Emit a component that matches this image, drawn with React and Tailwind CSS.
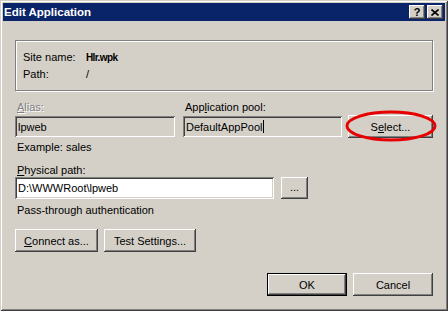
import React from "react";

const raised =
  "shadow-[inset_-1px_-1px_0_#404040,inset_1px_1px_0_#ffffff,inset_-2px_-2px_0_#808080,inset_2px_2px_0_#d4d0c8]";
const sunken =
  "shadow-[inset_1px_1px_0_#808080,inset_-1px_-1px_0_#ffffff,inset_2px_2px_0_#404040,inset_-2px_-2px_0_#d4d0c8]";

function Btn({ children, w, isDefault }) {
  if (isDefault) {
    return (
      <div className={`${w} h-[23px] border border-black bg-[#d4d0c8]`}>
        <div className={`w-full h-full flex items-center justify-center ${raised}`}>{children}</div>
      </div>
    );
  }
  return (
    <div className={`${w} h-[23px] flex items-center justify-center bg-[#d4d0c8] ${raised}`}>
      {children}
    </div>
  );
}

function Field({ w, h = "h-[21px]", white, children }) {
  return (
    <div className={`${w} ${h} flex items-center pl-[3px] ${white ? "bg-white" : "bg-[#d4d0c8]"} ${sunken}`}>
      {children}
    </div>
  );
}

export default function App() {
  return (
    <div className="relative w-[448px] h-[311px] bg-[#d4d0c8] p-[3px] text-[11px] leading-[14px] text-black font-['Liberation_Sans',Arial,sans-serif] shadow-[inset_1px_1px_0_#d4d0c8,inset_-1px_-1px_0_#404040,inset_2px_2px_0_#ffffff,inset_-2px_-2px_0_#808080]">
      {/* Title bar */}
      <div className="h-[18px] flex items-center justify-between bg-[#0a246a] pl-[1px] pr-[2px]">
        <span className="text-white font-bold text-[11.5px]">Edit Application</span>
        <div className="flex gap-[2px]">
          <div className={`w-[16px] h-[14px] bg-[#d4d0c8] flex items-center justify-center font-bold text-[11px] leading-none ${raised}`}>?</div>
          <div className={`w-[16px] h-[14px] bg-[#d4d0c8] flex items-center justify-center ${raised}`}>
            <svg width="8" height="7" viewBox="0 0 8 7">
              <path d="M0.5 0.5 L7.5 6.5 M7.5 0.5 L0.5 6.5" stroke="#000" strokeWidth="1.6" />
            </svg>
          </div>
        </div>
      </div>

      <div className="px-[12px]">
        {/* Group box */}
        <div className="mt-[19px] h-[51px] border border-[#808080] shadow-[1px_1px_0_#ffffff,inset_1px_1px_0_#ffffff] pl-[7px] pt-[8px]">
          <div className="flex leading-[17px]">
            <span className="w-[63px]">Site name:</span>
            <span className="font-bold tracking-[-0.6px] text-[10px]">Hlr.wpk</span>
          </div>
          <div className="flex leading-[17px]">
            <span className="w-[63px]">Path:</span>
            <span>/</span>
          </div>
        </div>

        {/* Alias / Application pool */}
        <div className="mt-[9px] flex">
          <span className="w-[168px] pl-[2px] text-[#808080] [text-shadow:1px_1px_0_#ffffff]">
            <u>A</u>lias:
          </span>
          <span className="pl-[2px]">
            App<u>l</u>ication pool:
          </span>
        </div>
        <div className="mt-[1px] flex items-center h-[23px]">
          <Field w="w-[160px]">lpweb</Field>
          <div className="ml-[8px]">
            <Field w="w-[159px]">
              DefaultAppPool<span className="w-px h-[13px] bg-black ml-[1px]" />
            </Field>
          </div>
          <div className="ml-[6px]">
            <Btn w="w-[85px]">
              S<u>e</u>lect...
            </Btn>
          </div>
        </div>
        <div className="mt-[2px] pl-[2px]">Example: sales</div>

        {/* Physical path */}
        <div className="mt-[9px] pl-[2px]">
          <u>P</u>hysical path:
        </div>
        <div className="flex">
          <Field w="w-[259px]" h="h-[22px]" white>
            D:\WWWRoot\lpweb
          </Field>
          <div className="ml-[7px] w-[27px] h-[22px] flex items-center justify-center pb-[2px] bg-[#d4d0c8] shadow-[inset_-1px_-1px_0_#404040,inset_1px_1px_0_#ffffff,inset_-2px_-2px_0_#808080]">
            ...
          </div>
        </div>
        <div className="mt-[4px] pl-[2px]">Pass-through authentication</div>

        <div className="mt-[12px] flex gap-[6px]">
          <Btn w="w-[83px]">
            <span>
              <u>C</u>onnect as...
            </span>
          </Btn>
          <Btn w="w-[92px]">Test Settings...</Btn>
        </div>

        <div className="mt-[21px] flex justify-end gap-[6px]">
          <Btn w="w-[80px]" isDefault>
            OK
          </Btn>
          <Btn w="w-[80px]">Cancel</Btn>
        </div>
      </div>

      {/* Red hand-drawn highlight */}
      <svg className="absolute left-[344px] top-[109px]" width="94" height="34" viewBox="0 0 94 34">
        <ellipse cx="47" cy="17" rx="44" ry="14" fill="none" stroke="#e60000" strokeWidth="3" />
      </svg>
    </div>
  );
}
